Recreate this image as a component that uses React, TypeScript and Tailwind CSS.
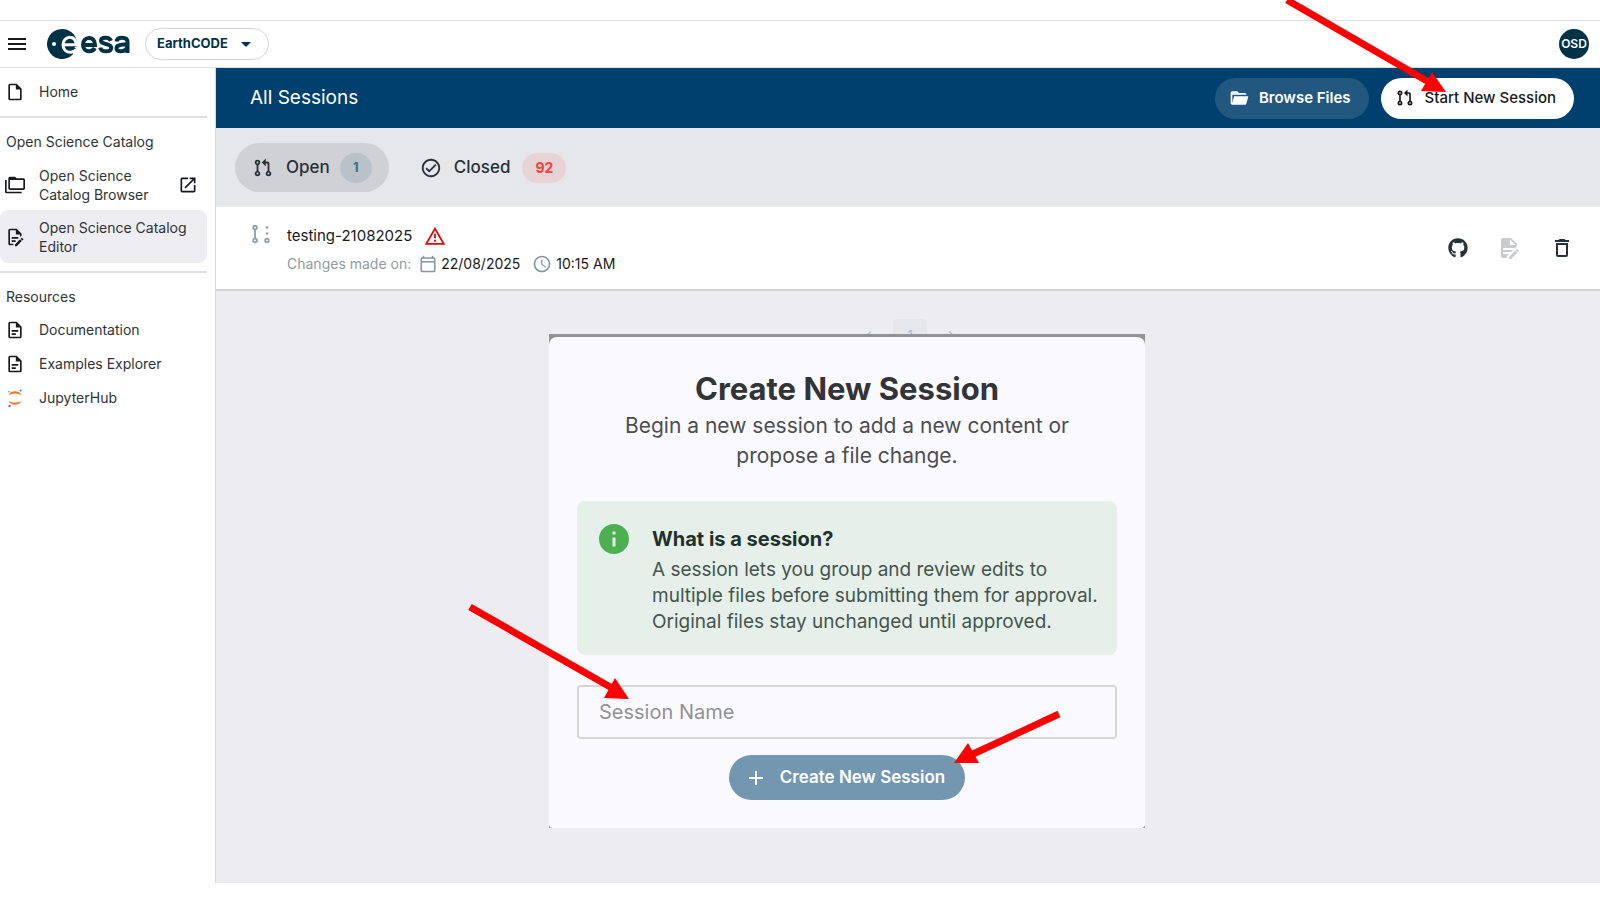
import React from "react";
import {
  MdMenu, MdArrowDropDown, MdOpenInNew, MdOutlineCheckCircle, MdOutlineCalendarToday,
  MdAccessTime, MdAdd, MdInfo, MdChevronLeft, MdChevronRight,
} from "react-icons/md";
import { FaGithub } from "react-icons/fa";

type IconProps = { className?: string };

const EsaLogo = () => (
  <svg viewBox="0 0 84 30" className="h-[30px] w-[84px] text-[#003247]" role="img" aria-label="esa">
    <path d="M15 0A15 15 0 1 0 25.800 25.400L27 22L30 17.500L29.800 12A15 15 0 0 0 15 0Z" fill="currentColor" />
    <circle cx="7" cy="15" r="2" fill="#fff" />
    <path d="M17.500 15.800H29.200C28.800 11 26.300 8.300 22.900 8.300C19 8.300 16 11.500 16 15.700C16 20.200 19 23.200 23.500 23.200C26 23.200 28 22.300 29.500 20.500" fill="none" stroke="#fff" strokeWidth="3" />
    <path d="M28.500 17.400H32V20.500L29.500 19.500L27.500 18.800Z" fill="#fff" />
    <g fill="none" stroke="currentColor" strokeWidth="4">
      <path d="M36 16H48C48 11.500 45.500 9 42 9C38.500 9 36 11.700 36 15.700C36 20 38.700 22.200 42.200 22.200C45 22.200 46.800 21 47.800 19" />
      <path d="M64 11.800C63 9.500 61 8.700 58.500 8.700C55.800 8.700 54 9.800 54 11.800C54 16.300 64.200 13.800 64.200 18.800C64.200 21.200 62 22.300 59 22.300C56 22.300 53.800 21.200 53.200 18.600" />
      <path d="M69.500 12.500C70 9.800 72 8.700 75 8.700C78.500 8.700 80.500 10 80.500 12.700V24M80.500 15C77 16 69.500 15 69.500 19.200C69.500 21.200 71 22.300 73.500 22.300C77.500 22.300 80.500 20.500 80.500 16" />
    </g>
  </svg>
);

const Glyph = ({ className, d }: IconProps & { d: string }) => (
  <svg viewBox="0 0 24 24" className={className} fill="currentColor" fillRule="evenodd" aria-hidden="true">
    <path d={d} />
  </svg>
);

const FILE = "M14 2H6A2 2 0 0 0 4 4V20A2 2 0 0 0 6 22H18A2 2 0 0 0 20 20V8L14 2M18 20H6V4H13V9H18V20Z";
const FOLDERS = "M22 4H14L12 2H6C4.900 2 4 2.900 4 4V16C4 17.100 4.900 18 6 18H22C23.100 18 24 17.100 24 16V6C24 4.900 23.100 4 22 4M22 16H6V6H22V16M2 6H0V20C0 21.100 .9 22 2 22H20V20H2V6Z";
const FILE_EDIT_OUTLINE = "M8 12H16V14H8V12M10 20H6V4H13V9H18V12.100L20 10.100V8L14 2H6C4.900 2 4 2.900 4 4V20C4 21.100 4.900 22 6 22H10V20M8 18H12.100L13 17.100V16H8V18M20.200 13C20.300 13 20.500 13.100 20.600 13.200L21.900 14.500C22.100 14.700 22.100 15.100 21.900 15.300L20.900 16.300L18.800 14.200L19.800 13.200C19.900 13.100 20 13 20.200 13M20.200 16.900L14.100 23H12V20.900L18.100 14.800L20.200 16.900Z";
const FILE_EDIT = "M6 2C4.900 2 4 2.900 4 4V20C4 21.100 4.900 22 6 22H10V20.100L12.100 18H6V16H14.100L16.100 14H6V12H18.100L20 10.100V8L14 2H6M13 3.500L18.500 9H13V3.500M20.100 13C20 13 19.800 13.100 19.700 13.200L18.700 14.200L20.800 16.300L21.800 15.300C22 15.100 22 14.700 21.800 14.500L20.500 13.200C20.400 13.100 20.300 13 20.100 13M18.100 14.800L12 20.900V23H14.100L20.200 16.900L18.100 14.800Z";
const DOCUMENT = "M6 2A2 2 0 0 0 4 4V20A2 2 0 0 0 6 22H18A2 2 0 0 0 20 20V8L14 2H6M6 4H13V9H18V20H6V4M8 12V14H16V12H8M8 16V18H13V16H8Z";
const FOLDER_OPEN = "M19 20H4C2.890 20 2 19.100 2 18V6C2 4.890 2.890 4 4 4H10L12 6H19A2 2 0 0 1 21 8H4V18L6.140 10H23.210L20.930 18.500C20.700 19.370 19.920 20 19 20Z";
const PULL_REQUEST = "M6 3A3 3 0 0 1 9 6C9 7.310 8.170 8.420 7 8.830V15.170C8.170 15.580 9 16.690 9 18A3 3 0 0 1 6 21A3 3 0 0 1 3 18C3 16.690 3.830 15.580 5 15.170V8.830C3.830 8.420 3 7.310 3 6A3 3 0 0 1 6 3M6 5A1 1 0 0 0 5 6A1 1 0 0 0 6 7A1 1 0 0 0 7 6A1 1 0 0 0 6 5M6 17A1 1 0 0 0 5 18A1 1 0 0 0 6 19A1 1 0 0 0 7 18A1 1 0 0 0 6 17M21 18A3 3 0 0 1 18 21A3 3 0 0 1 15 18C15 16.690 15.830 15.580 17 15.170V7H15V10.250L10.750 6L15 1.750V5H17A2 2 0 0 1 19 7V15.170C20.170 15.580 21 16.690 21 18M18 17A1 1 0 0 0 17 18A1 1 0 0 0 18 19A1 1 0 0 0 19 18A1 1 0 0 0 18 17Z";
const TRASH = "M6 19A2 2 0 0 0 8 21H16A2 2 0 0 0 18 19V7H6V19M8 9H16V19H8V9M15.500 4L14.500 3H9.500L8.500 4H5V6H19V4H15.500Z";

const Jupyter = ({ className }: IconProps) => (
  <svg viewBox="0 0 24 24" className={className} aria-hidden="true">
    <path d="M4 9C5.200 5.800 8.300 4 12 4S18.800 5.800 20 9C18.300 7.300 15.500 6.500 12 6.500S5.700 7.300 4 9ZM4 15C5.200 18.200 8.300 20 12 20S18.800 18.200 20 15C18.300 16.700 15.500 17.500 12 17.500S5.700 16.700 4 15Z" fill="#f37726" />
    <circle cx="18.800" cy="3" r="1.300" fill="#767677" />
    <circle cx="5.500" cy="21.500" r="1.500" fill="#767677" />
    <circle cx="4.800" cy="4.500" r=".9" fill="#767677" />
  </svg>
);

const PullRequestDraft = ({ className }: IconProps) => (
  <svg viewBox="0 0 24 24" className={className} fill="none" stroke="currentColor" strokeWidth="2" aria-hidden="true">
    <circle cx="5.500" cy="5" r="2" />
    <circle cx="5.500" cy="19" r="2" />
    <circle cx="18.500" cy="19" r="2" />
    <path d="M5.500 7V17" />
    <circle cx="18.500" cy="5" r="1.400" fill="currentColor" stroke="none" />
    <circle cx="18.500" cy="11.500" r="1.400" fill="currentColor" stroke="none" />
  </svg>
);

const Warning = ({ className }: IconProps) => (
  <svg viewBox="0 0 24 24" className={className} aria-hidden="true">
    <path d="M12 4L21.500 20.500H2.500L12 4Z" fill="none" stroke="currentColor" strokeWidth="2" />
    <path d="M12 9.500V14.500M12 16.200V18.400" stroke="currentColor" strokeWidth="2" />
  </svg>
);

const navLink = "flex items-center gap-3.5 rounded-lg px-[5px] text-sm text-[#2f3337]";
const navHeading = "pl-1.5 text-sm leading-6 text-[#2f3337]";
const navIcon = "size-5 shrink-0 text-[#17191c]";

function Sidebar() {
  return (
    <nav className="w-[216px] shrink-0 border-r border-[#d4d6e0] bg-white pr-2">
      <div className="border-b-2 border-[#dfe0ea] py-2">
        <a href="#home" className={`${navLink} h-8`}><Glyph d={FILE} className={navIcon} />Home</a>
      </div>
      <div className="border-b-2 border-[#dfe0ea] pt-3 pb-2">
        <h2 className={`${navHeading} pb-1.5`}>Open Science Catalog</h2>
        <a href="#browser" className={`${navLink} h-[50px] leading-[19px]`}>
          <Glyph d={FOLDERS} className={navIcon} />
          <span>Open Science<br />Catalog Browser</span>
          <MdOpenInNew className="mr-1 ml-auto size-5 shrink-0 text-[#17191c]" />
        </a>
        <a href="#editor" className={`${navLink} h-[53px] bg-[#eeedf2] leading-[19px]`}>
          <Glyph d={FILE_EDIT_OUTLINE} className={navIcon} />
          <span>Open Science Catalog Editor</span>
        </a>
      </div>
      <div className="pt-3">
        <h2 className={`${navHeading} pb-1`}>Resources</h2>
        <a href="#docs" className={`${navLink} h-[34px]`}><Glyph d={DOCUMENT} className={navIcon} />Documentation</a>
        <a href="#examples" className={`${navLink} h-[34px]`}><Glyph d={DOCUMENT} className={navIcon} />Examples Explorer</a>
        <a href="#jupyter" className={`${navLink} h-[34px]`}><Jupyter className={navIcon} />JupyterHub</a>
      </div>
    </nav>
  );
}

function SessionDialog() {
  return (
    <section role="dialog" aria-labelledby="dialog-title" className="absolute top-[266px] left-[333px] w-[596px] bg-[#929296] pt-[3px]">
      <div className="flex flex-col items-center rounded-t-lg rounded-b-sm bg-[#faf9fe] px-7 pt-8 pb-7">
        <h2 id="dialog-title" className="text-[31px] leading-10 font-bold text-[#333438]">Create New Session</h2>
        <p className="mt-0.5 text-center text-[21px] leading-[30px] text-[#4c4d52]">
          Begin a new session to add a new content or<br />propose a file change.
        </p>
        <div className="mt-[30px] flex w-full gap-5 rounded-lg bg-[#e5f0ea] py-5 pl-[19px]">
          <MdInfo className="size-9 shrink-0 text-[#4caf50]" />
          <div className="text-[19px] leading-[26px] whitespace-nowrap text-[#46544e]">
            <h3 className="mt-1 mb-1 text-xl leading-7 font-bold text-[#20302a]">What is a session?</h3>
            <p>A session lets you group and review edits to<br />multiple files before submitting them for approval.<br />Original files stay unchanged until approved.</p>
          </div>
        </div>
        <input aria-label="Session Name" placeholder="Session Name" className="mt-[30px] h-[54px] w-full rounded-sm border-2 border-[#d6d5db] bg-transparent px-5 text-xl text-[#333438] placeholder:text-[#929196]" />
        <button className="mt-4 flex h-[45px] items-center gap-3 rounded-full bg-[#7497b1] pr-5 pl-[15px] text-[17px] font-semibold text-white">
          <MdAdd className="size-6" />Create New Session
        </button>
      </div>
    </section>
  );
}

export default function App() {
  return (
    <div className="relative min-h-screen overflow-hidden bg-white pt-5 font-['Inter',sans-serif] text-[#17191c]">
      <header className="flex h-12 items-center border-y border-[#dcdde3] pr-[11px] pl-[5px]">
        <button aria-label="Menu"><MdMenu className="size-6" /></button>
        <a href="#esa" className="ml-[18px]"><EsaLogo /></a>
        <button className="ml-[14px] flex h-8 items-center gap-1.5 rounded-full border border-[#d3d4de] pr-[10px] pl-[11px] text-[13px] font-bold text-[#003247]">
          EarthCODE<MdArrowDropDown className="size-6" />
        </button>
        <button className="ml-auto size-[30px] rounded-full bg-[#003247] text-xs font-semibold text-white">OSD</button>
      </header>
      <div className="flex">
        <Sidebar />
        <main className="relative min-h-[815px] flex-1 bg-[#edecf1]">
          <div className="flex h-[60px] items-center gap-3 bg-[#00406e] pr-[26px] pl-[34px]">
            <h1 className="mr-auto text-[19px] text-white">All Sessions</h1>
            <button className="flex h-[41px] items-center gap-2.5 rounded-full bg-[#22587f] pr-[18px] pl-3.5 text-[15px] font-semibold text-white">
              <Glyph d={FOLDER_OPEN} className="size-5" />Browse Files
            </button>
            <button className="flex h-[41px] items-center gap-2.5 rounded-full bg-white pr-[18px] pl-3.5 text-[15px] font-medium text-[#17191c]">
              <Glyph d={PULL_REQUEST} className="size-5" />Start New Session
            </button>
          </div>
          <div className="flex h-[79px] items-center gap-4 bg-[#e6e7eb] px-[19px]">
            <button className="flex h-[49px] items-center gap-3 rounded-full bg-[#d0d1d5] px-[17px] text-[17px] font-medium text-[#263238]">
              <Glyph d={PULL_REQUEST} className="size-[22px]" />
              <span className="flex items-center gap-2.5">Open<span className="grid h-[30px] w-8 place-items-center rounded-full bg-[#bac2c9] text-[13px] font-bold text-[#3c6e87]">1</span></span>
            </button>
            <button className="flex h-[49px] items-center gap-3 px-[15px] text-[17px] font-medium text-[#263238]">
              <MdOutlineCheckCircle className="size-[22px]" />Closed
              <span className="grid h-[30px] w-11 place-items-center rounded-full bg-[#e8d4d6] text-sm font-bold text-[#f44336]">92</span>
            </button>
          </div>
          <article className="flex h-[84px] items-center border-b-2 border-[#d3d3d8] bg-white pr-[26px] pl-[34px]">
            <PullRequestDraft className="mb-7 size-[22px] shrink-0 text-[#90a0aa]" />
            <div className="ml-[15px]">
              <div className="flex h-8 items-center gap-3 text-[15px]">testing-21082025<Warning className="size-[22px] text-[#dd0909]" /></div>
              <div className="flex h-6 items-center text-sm">
                <span className="text-[#8f9ba3]">Changes made on:</span>
                <MdOutlineCalendarToday className="mr-1 ml-2 size-[18px] text-[#8495a0]" />22/08/2025
                <MdAccessTime className="mr-1 ml-3 size-5 text-[#8495a0]" />10:15 AM
              </div>
            </div>
            <div className="ml-auto flex items-center gap-[29px] text-[#263238]">
              <button aria-label="Open on GitHub"><FaGithub className="size-5" /></button>
              <button aria-label="Edit session" disabled className="text-[#c9cbcd]"><Glyph d={FILE_EDIT} className="size-6" /></button>
              <button aria-label="Delete session"><Glyph d={TRASH} className="size-6" /></button>
            </div>
          </article>
          <div className="flex justify-center gap-4 pt-7 pl-1 text-xs text-[#a9c1d2]">
            <MdChevronLeft className="mt-2 size-4" />
            <span className="grid size-[34px] place-items-center rounded bg-[#e5e7eb] text-sm">1</span>
            <MdChevronRight className="mt-2 size-4" />
          </div>
          <SessionDialog />
        </main>
      </div>
      <svg className="pointer-events-none absolute top-0 left-0 h-[900px] w-[1600px]" viewBox="0 0 1600 900" fill="#f00" stroke="#f00" aria-hidden="true">
        <path d="M1287 0L1427 81M470 607L612 688M1059 714L973 754" strokeWidth="7" />
        <path d="M1446 92L1421 91L1432 72ZM629 699L604 698L615 678ZM954 763L968 743L979 763Z" stroke="none" />
      </svg>
    </div>
  );
}
